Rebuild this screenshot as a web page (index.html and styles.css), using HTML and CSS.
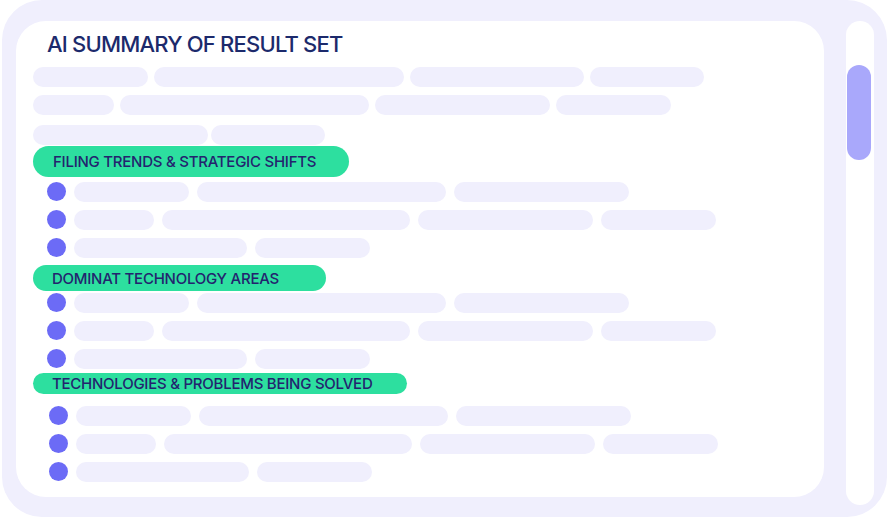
FILE: index.html
```html
<!DOCTYPE html>
<html lang="en">
<head>
<meta charset="utf-8">
<title>AI Summary of Result Set</title>
<link rel="stylesheet" href="styles.css">
</head>
<body>
<div class="frame">
  <div class="card">
    <h1 class="title">AI SUMMARY OF RESULT SET</h1>
    <div class="skeleton">
      <div class="line"><span class="bar w115"></span><span class="bar w250"></span><span class="bar w174"></span><span class="bar w114"></span></div>
      <div class="line"><span class="bar w81"></span><span class="bar w249"></span><span class="bar w175"></span><span class="bar w115"></span></div>
      <div class="line tight"><span class="bar w175"></span><span class="bar w114"></span></div>
    </div>

    <section class="sec sec1">
      <div class="pill p1">FILING TRENDS &amp; STRATEGIC SHIFTS</div>
      <ul class="bullets">
        <li class="row"><span class="dot"></span><span class="bar w115"></span><span class="bar w249"></span><span class="bar w175"></span></li>
        <li class="row"><span class="dot"></span><span class="bar w80"></span><span class="bar w248"></span><span class="bar w175"></span><span class="bar w115"></span></li>
        <li class="row"><span class="dot"></span><span class="bar w173"></span><span class="bar w115"></span></li>
      </ul>
    </section>

    <section class="sec sec2">
      <div class="pill p2">DOMINAT TECHNOLOGY AREAS</div>
      <ul class="bullets">
        <li class="row"><span class="dot"></span><span class="bar w115"></span><span class="bar w249"></span><span class="bar w175"></span></li>
        <li class="row"><span class="dot"></span><span class="bar w80"></span><span class="bar w248"></span><span class="bar w175"></span><span class="bar w115"></span></li>
        <li class="row"><span class="dot"></span><span class="bar w173"></span><span class="bar w115"></span></li>
      </ul>
    </section>

    <section class="sec sec3">
      <div class="pill p3">TECHNOLOGIES &amp; PROBLEMS BEING SOLVED</div>
      <ul class="bullets shifted">
        <li class="row"><span class="dot"></span><span class="bar w115"></span><span class="bar w249"></span><span class="bar w175"></span></li>
        <li class="row"><span class="dot"></span><span class="bar w80"></span><span class="bar w248"></span><span class="bar w175"></span><span class="bar w115"></span></li>
        <li class="row"><span class="dot"></span><span class="bar w173"></span><span class="bar w115"></span></li>
      </ul>
    </section>
  </div>
  <div class="track"><div class="thumb"></div></div>
</div>
</body>
</html>
```

FILE: styles.css
```css
* { box-sizing: border-box; }

html, body {
  margin: 0;
  padding: 0;
  background: #ffffff;
  font-family: "Inter", "Liberation Sans", sans-serif;
}

.frame {
  margin: 0 2px;
  width: 885px;
  height: 517px;
  background: #f0effd;
  border-radius: 40px;
  padding: 21px 12px 0 14px;
  display: flex;
  align-items: flex-start;
  gap: 22px;
}

.card {
  width: 808px;
  height: 476px;
  background: #ffffff;
  border-radius: 30px;
  padding: 10px 0 0 17px;
  flex: none;
}

.title {
  margin: 0 0 10px 14px;
  font-size: 22px;
  line-height: 26px;
  font-weight: 500;
  color: #1c2a6c;
  letter-spacing: -0.8px;
}

.skeleton {
  display: flex;
  flex-direction: column;
  gap: 8px;
}

.line {
  display: flex;
  gap: 6px;
}
.line.tight { margin-top: 2px; gap: 3px; }

.bar {
  display: block;
  height: 20px;
  border-radius: 10px;
  background: #f0effd;
  flex: none;
}
.w80 { width: 80px; }
.w81 { width: 81px; }
.w114 { width: 114px; }
.w115 { width: 115px; }
.w173 { width: 173px; }
.w174 { width: 174px; }
.w175 { width: 175px; }
.w248 { width: 248px; }
.w249 { width: 249px; }
.w250 { width: 250px; }

.pill {
  display: flex;
  align-items: center;
  background: #2ddf9f;
  color: #23246e;
  font-size: 15px;
  font-weight: 500;
  letter-spacing: -0.25px;
  padding-left: 20px;
  border-radius: 16px;
  white-space: nowrap;
}
.p1 { width: 316px; height: 31px; }
.p2 { width: 293px; height: 26px; padding-left: 19px; }
.p3 { width: 374px; height: 21px; padding-left: 19px; }

.sec1 { margin-top: 1px; }
.sec2 { margin-top: 7px; }
.sec3 { margin-top: 4px; }

.sec1 .bullets { margin-top: 5px; }
.sec2 .bullets { margin-top: 2px; }
.sec3 .bullets { margin-top: 12px; }

.bullets {
  list-style: none;
  margin: 0;
  padding: 0 0 0 14px;
  display: flex;
  flex-direction: column;
  gap: 8px;
}
.bullets.shifted { padding-left: 16px; }

.row {
  display: flex;
  align-items: center;
  gap: 8px;
  height: 20px;
}

.dot {
  display: block;
  width: 19px;
  height: 19px;
  border-radius: 50%;
  background: #6c6bf6;
  flex: none;
  margin-top: -2px;
}

.track {
  width: 28px;
  height: 484px;
  background: #ffffff;
  border-radius: 14px;
  padding: 44px 3px 0 1px;
  flex: none;
}

.thumb {
  width: 24px;
  height: 95px;
  background: #a9a8fb;
  border-radius: 12px;
}
```
